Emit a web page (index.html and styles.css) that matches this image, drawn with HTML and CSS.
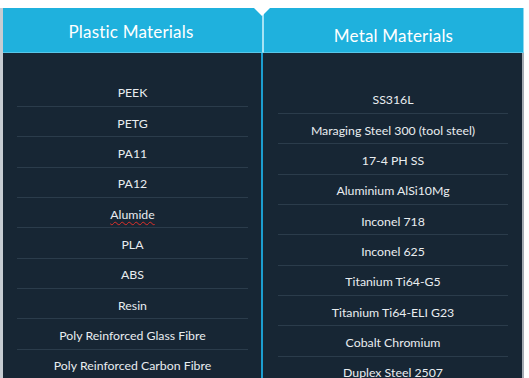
FILE: index.html
```html
<!DOCTYPE html>
<html>
<head>
<meta charset="utf-8">
<link rel="stylesheet" href="styles.css">
</head>
<body>
<div class="table">
  <div class="notch"></div>
  <div class="col col-left">
    <div class="head"><h2>Plastic Materials</h2></div>
    <ul class="body">
      <li>PEEK</li>
      <li>PETG</li>
      <li>PA11</li>
      <li>PA12</li>
      <li><span class="spell">Alumide</span></li>
      <li>PLA</li>
      <li>ABS</li>
      <li>Resin</li>
      <li>Poly Reinforced Glass Fibre</li>
      <li>Poly Reinforced Carbon Fibre</li>
    </ul>
  </div>
  <div class="col col-right">
    <div class="head"><h2>Metal Materials</h2></div>
    <ul class="body">
      <li>SS316L</li>
      <li>Maraging Steel 300 (tool steel)</li>
      <li>17-4 PH SS</li>
      <li>Aluminium AlSi10Mg</li>
      <li>Inconel 718</li>
      <li>Inconel 625</li>
      <li>Titanium Ti64-G5</li>
      <li>Titanium Ti64-ELI G23</li>
      <li>Cobalt Chromium</li>
      <li>Duplex Steel 2507</li>
    </ul>
  </div>
</div>
</body>
</html>
```
FILE: styles.css
```css
html, body {
  margin: 0;
  padding: 0;
  background: #ffffff;
  overflow: hidden;
}
body {
  padding-top: 8px;
  font-family: Lato, "Open Sans", sans-serif;
}
.table {
  position: relative;
  display: flex;
  width: 521px;
  border-left: 3px solid #c6ccd2;
}
.notch {
  position: absolute;
  left: 251px;
  top: 0;
  width: 0;
  height: 0;
  border-left: 8px solid transparent;
  border-right: 8px solid transparent;
  border-top: 8px solid #ffffff;
}
.col {
  display: flex;
  flex-direction: column;
}
.col-left { width: 260px; }
.col-right { width: 261px; }
.head {
  background: #1fb1dd;
  height: 44px;
  border-bottom: 1px solid #58c6e8;
  display: flex;
  justify-content: center;
  align-items: center;
  box-sizing: border-box;
}
.col-left .head { border-right: 1px solid #a6e3f4; padding: 2px 3px 0 0; height: 45px; }
.col-right .head { border-left: 1px solid #a6e3f4; border-right: 1px solid #8fd9ef; padding-top: 10px; height: 45px; }
.head h2 {
  margin: 0;
  color: #ffffff;
  font-weight: 400;
  font-size: 17px;
  letter-spacing: 0.2px;
}
.body {
  list-style: none;
  margin: 0;
  background: #172634;
  height: 330px;
}
.col-left .body {
  padding: 23.5px 13px 0 14px;
  border-right: 2px solid #1c9ed0;
}
.col-right .body {
  padding: 30.5px 14px 0 15px;
  border-right: 2px solid #a3abb3;
}
.body li {
  border-bottom: 1px solid #2b3c4b;
  color: #e9edf0;
  font-size: 12.3px;
  display: flex;
  justify-content: center;
  align-items: center;
  padding-top: 3px;
  box-sizing: border-box;
  height: 30.35px;
}
.spell {
  text-decoration: underline wavy #e0302a;
  text-decoration-thickness: 1px;
  text-underline-offset: 2px;
}
```
